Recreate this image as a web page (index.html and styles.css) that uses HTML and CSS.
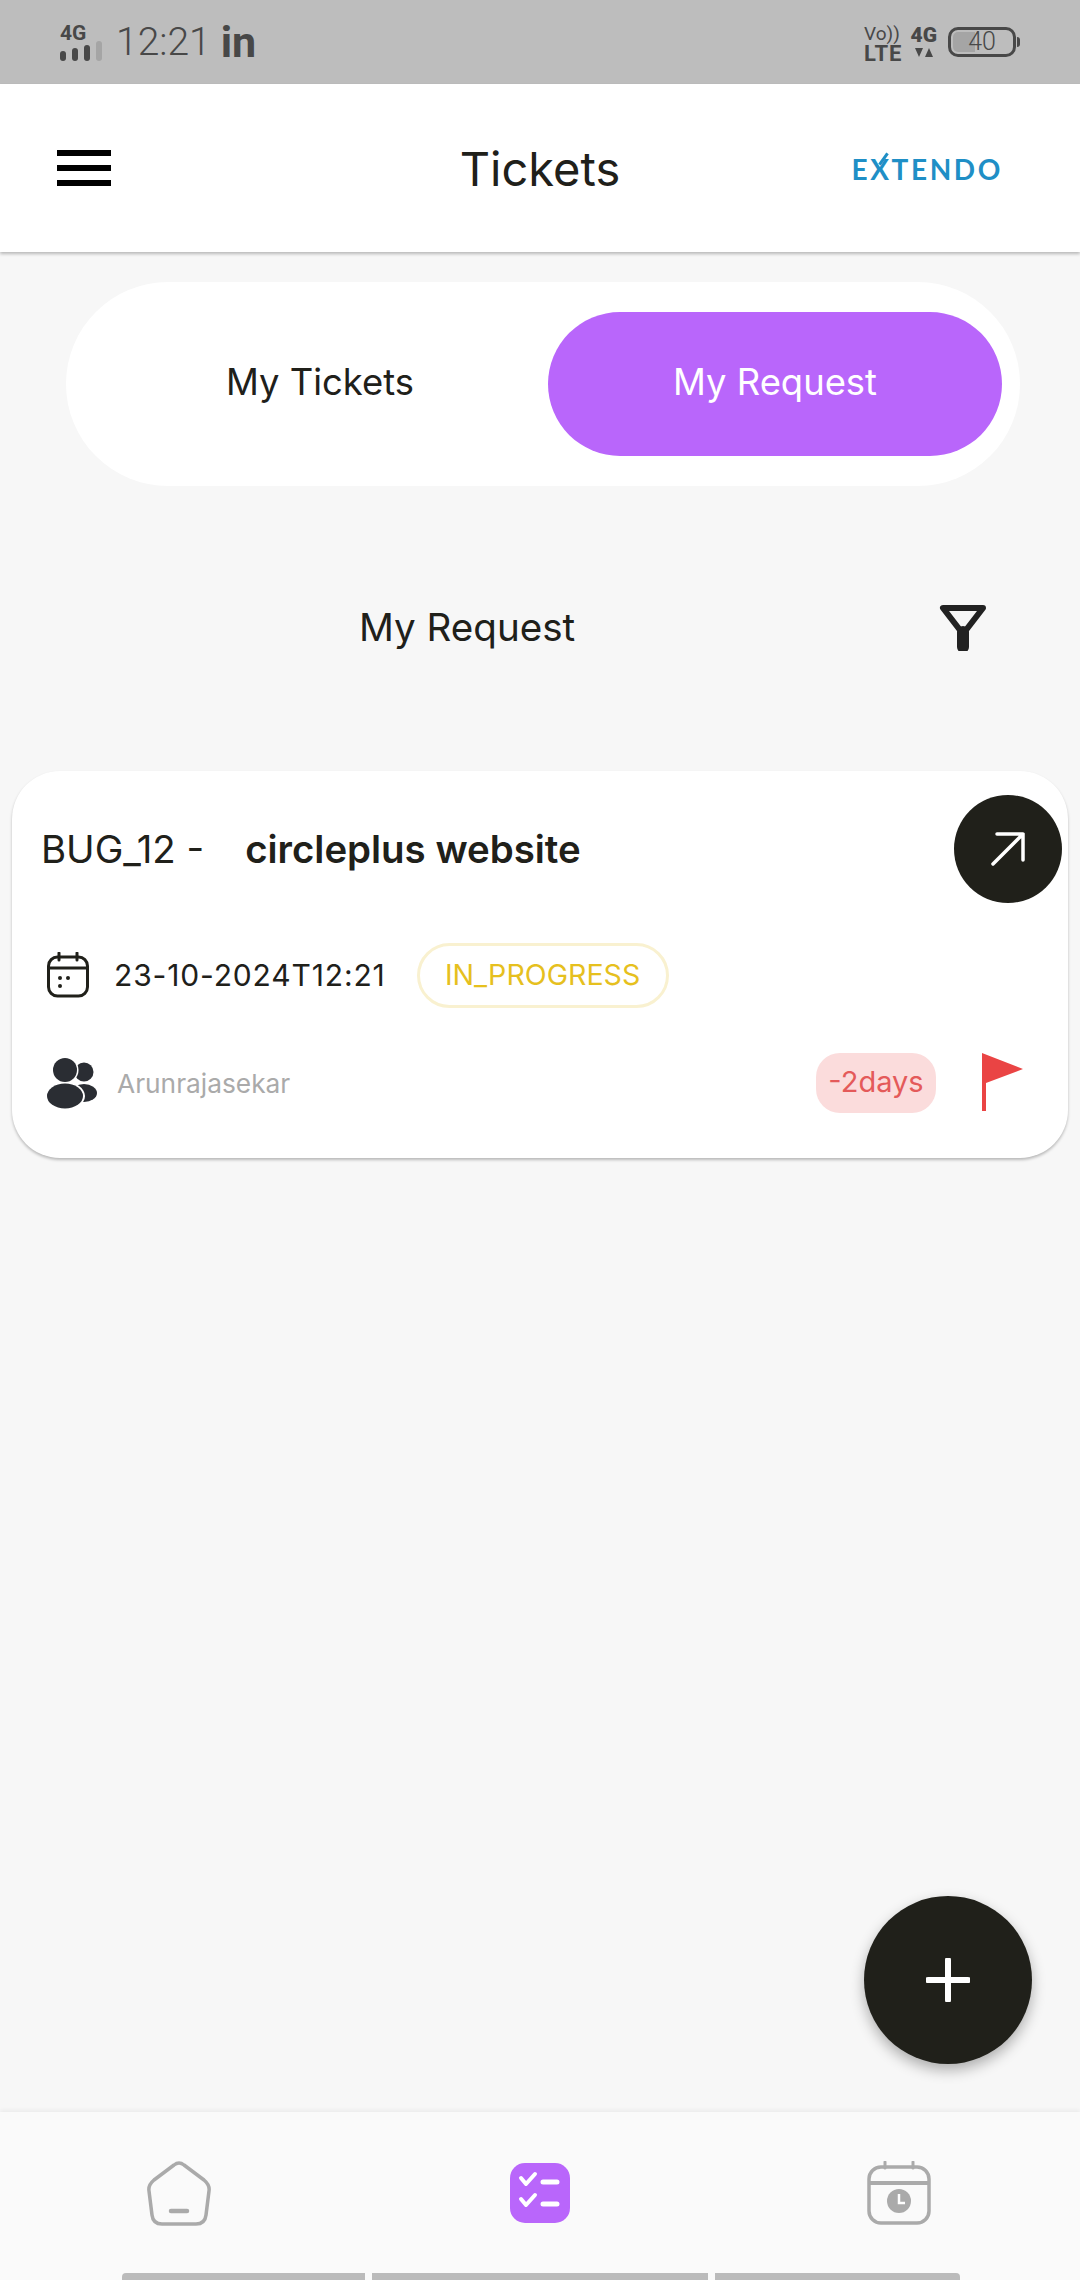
FILE: index.html
```html
<!DOCTYPE html>
<html lang="en">
  <head>
    <meta charset="UTF-8" />
    <meta name="viewport" content="width=device-width, initial-scale=1.0" />
    <title>Tickets</title>
    <link rel="stylesheet" href="styles.css">
  </head>
  <body>
    <div class="screen">
      <div class="status-bar">
        <div class="status-left">
          <div class="signal">
            <span class="signal-label">4G</span>
            <div class="signal-bars">
              <i class="bar bar-1"></i><i class="bar bar-2"></i><i class="bar bar-3"></i><i class="bar bar-4"></i>
            </div>
          </div>
          <span class="clock">12:21</span>
          <span class="linkedin">in</span>
        </div>
        <div class="status-right">
          <div class="volte"><span class="vo">Vo))</span><span class="lte">LTE</span></div>
          <div class="data">
            <span class="data-label">4G</span>
            <svg width="18" height="9" viewBox="0 0 18 9"><path d="M0 0H8L4 9ZM14 0L18 9H10Z" fill="#484848"/></svg>
          </div>
          <div class="battery"><span class="battery-fill"></span><span class="battery-text">40</span></div>
          <span class="battery-nub"></span>
        </div>
      </div>

      <header class="app-bar">
        <div class="menu"><span></span><span></span><span></span></div>
        <h1 class="app-title">Tickets</h1>
        <div class="logo">E<span class="logo-x">X</span>TENDO</div>
      </header>

      <main class="content">
        <div class="toggle">
          <div class="toggle-item">My Tickets</div>
          <div class="toggle-item active">My Request</div>
        </div>

        <div class="list-head">
          <h2 class="list-title">My Request</h2>
          <svg class="filter" width="48" height="48" viewBox="0 0 48 48">
            <path d="M4 5H44L24 31Z" fill="none" stroke="#222" stroke-width="6" stroke-linejoin="round"/>
            <path d="M24 29V44" stroke="#222" stroke-width="12" stroke-linecap="round"/>
          </svg>
        </div>

        <section class="card">
          <div class="card-top">
            <div class="card-title"><span class="ticket-id">BUG_12 -</span><b class="ticket-name">circleplus website</b></div>
            <div class="open-btn">
              <svg width="36" height="36" viewBox="0 0 36 36">
                <path d="M3 33L33 3M7 3H33V29" fill="none" stroke="#fff" stroke-width="3.5" stroke-linecap="round" stroke-linejoin="round"/>
              </svg>
            </div>
          </div>
          <div class="card-row">
            <svg width="42" height="46" viewBox="0 0 42 46">
              <rect x="1.5" y="5" width="39" height="39" rx="9" fill="none" stroke="#20201a" stroke-width="3"/>
              <path d="M2 16H40M12 1V8M30 1V8" fill="none" stroke="#20201a" stroke-width="3" stroke-linecap="round"/>
              <circle cx="13" cy="26" r="2" fill="#20201a"/><circle cx="21" cy="26" r="2" fill="#20201a"/><circle cx="13" cy="34" r="2" fill="#20201a"/>
            </svg>
            <span class="date">23-10-2024T12:21</span>
            <span class="status-pill">IN_PROGRESS</span>
          </div>
          <div class="card-row card-foot">
            <svg width="51" height="51" viewBox="0 0 51 51">
              <circle cx="37" cy="14" r="9.5" fill="#2a2d33"/>
              <ellipse cx="37" cy="35" rx="13" ry="9" fill="#2a2d33"/>
              <circle cx="18" cy="12" r="13.5" fill="#fff"/><circle cx="18" cy="12" r="12" fill="#2a2d33"/>
              <ellipse cx="18" cy="38" rx="20" ry="14" fill="#fff"/><ellipse cx="18" cy="38" rx="18" ry="12.5" fill="#2a2d33"/>
            </svg>
            <span class="assignee">Arunrajasekar</span>
            <span class="due">-2days</span>
            <svg class="flag" width="42" height="58" viewBox="0 0 42 58">
              <path d="M0 0L41 16L4 30V58H0Z" fill="#ea4444"/>
            </svg>
          </div>
        </section>

        <button class="fab" type="button">
          <svg width="44" height="44" viewBox="0 0 44 44"><path d="M22 2V42M2 22H42" stroke="#fff" stroke-width="6" stroke-linecap="round"/></svg>
        </button>
      </main>

      <nav class="bottom-nav">
        <div class="nav-icons">
          <svg width="64" height="66" viewBox="0 0 64 66">
            <path d="M27 5Q32 1 37 5L57 20Q63 25 62 31L59 55Q58 64 49 64H15Q6 64 5 55L2 31Q1 25 7 20Z" fill="none" stroke="#aaa" stroke-width="3.5" stroke-linejoin="round"/>
            <path d="M24 51H40" stroke="#aaa" stroke-width="4.5" stroke-linecap="round"/>
          </svg>
          <svg width="60" height="60" viewBox="0 0 60 60">
            <rect width="60" height="60" rx="15" fill="#b966fb"/>
            <path d="M11 15L16 21L25 11M11 36L16 42L25 32" fill="none" stroke="#fff" stroke-width="4" stroke-linecap="round" stroke-linejoin="round"/>
            <path d="M33 19H47M33 41H47" stroke="#fff" stroke-width="5" stroke-linecap="round"/>
          </svg>
          <svg width="64" height="64" viewBox="0 0 64 64">
            <rect x="2" y="6" width="60" height="56" rx="12" fill="none" stroke="#aaa" stroke-width="3.5"/>
            <path d="M2 22H62" stroke="#aaa" stroke-width="4"/>
            <path d="M18 1V7M46 1V7" stroke="#aaa" stroke-width="3" stroke-linecap="round"/>
            <circle cx="32" cy="40" r="12" fill="#aaa"/>
            <path d="M32 33V42H38" fill="none" stroke="#fff" stroke-width="2.5"/>
          </svg>
        </div>
        <div class="home-bar"><span class="seg-a"></span><span class="seg-b"></span><span class="seg-c"></span></div>
      </nav>
    </div>
  </body>
</html>
```

FILE: styles.css
```css
* {
  box-sizing: border-box;
}
body {
  margin: 0;
  font-family: Inter, "Liberation Sans", sans-serif;
  color: #20201a;
}
.screen {
  display: flex;
  flex-direction: column;
  width: 1080px;
  height: 2280px;
  overflow: hidden;
  background-color: #f7f7f7;
}

/* status bar */
.status-bar {
  display: flex;
  justify-content: space-between;
  align-items: center;
  flex: 0 0 84px;
  padding: 0 60px;
  background-color: #bdbdbd;
  color: #484848;
  font-family: Roboto, sans-serif;
}
.status-left {
  display: flex;
  align-items: center;
  gap: 14px;
}
.signal {
  display: flex;
  flex-direction: column;
  margin-top: 2px;
  gap: 1px;
}
.signal-label {
  font-size: 21px;
  line-height: 14px;
  font-weight: 700;
}
.signal-bars {
  display: flex;
  align-items: flex-end;
  gap: 6px;
  height: 20px;
}
.bar {
  width: 6px;
  border-radius: 3px;
  background-color: #484848;
}
.bar-1 { height: 10px; }
.bar-2 { height: 13px; }
.bar-3 { height: 16px; }
.bar-4 { height: 20px; background-color: #a5a5a5; }
.clock {
  font-size: 39px;
  font-weight: 300;
  line-height: 44px;
}
.linkedin {
  margin-left: -4px;
  font-size: 43px;
  font-weight: 700;
  line-height: 44px;
}
.status-right {
  display: flex;
  align-items: center;
}
.volte {
  display: flex;
  flex-direction: column;
  gap: 1px;
  margin-right: 8px;
  margin-top: 2px;
}
.vo {
  font-size: 19px;
  line-height: 19px;
}
.lte {
  font-size: 22px;
  font-weight: 700;
  line-height: 19px;
  letter-spacing: 1px;
}
.data {
  display: flex;
  flex-direction: column;
  align-items: center;
  gap: 5px;
  margin-right: 11px;
}
.data-label {
  font-size: 21px;
  line-height: 15px;
  font-weight: 900;
}
.battery {
  position: relative;
  width: 68px;
  height: 30px;
  border: 3px solid #484848;
  border-radius: 10px;
}
.battery-fill {
  position: absolute;
  left: 2px;
  top: 2px;
  bottom: 2px;
  width: 22px;
  border-radius: 5px 0 0 5px;
  background-color: #a5a5a5;
}
.battery-text {
  position: absolute;
  inset: 0;
  font-size: 25px;
  font-weight: 300;
  line-height: 24px;
  text-align: center;
}
.battery-nub {
  width: 3px;
  height: 10px;
  margin-left: 1px;
  border-radius: 0 3px 3px 0;
  background-color: #484848;
}

/* app bar */
.app-bar {
  position: relative;
  display: grid;
  grid-template-columns: 1fr auto 1fr;
  align-items: center;
  flex: 0 0 168px;
  padding: 0 57px;
  background-color: #fff;
  box-shadow: 0 2px 3px rgba(0, 0, 0, 0.25);
}
.menu {
  display: flex;
  flex-direction: column;
  gap: 9px;
  width: 54px;
}
.menu span {
  height: 6px;
  background-color: #000;
}
.app-title {
  margin: 2px 0 0;
  font-size: 47px;
  font-weight: 400;
  line-height: 54px;
}
.logo {
  justify-self: end;
  margin: 2px 20px 0 0;
  font-family: Lato, sans-serif;
  font-size: 28px;
  font-weight: 700;
  line-height: 34px;
  letter-spacing: 2.6px;
  color: #1f8fc6;
}
.logo-x {
  position: relative;
}
.logo-x::after {
  content: "";
  position: absolute;
  left: 12px;
  top: 0;
  width: 3px;
  height: 14px;
  background-color: #1f8fc6;
  transform: rotate(35deg);
}

/* main area */
.content {
  position: relative;
  display: flex;
  flex-direction: column;
  flex: 1;
  padding-top: 30px;
}
.toggle {
  display: flex;
  align-items: center;
  justify-content: space-between;
  width: 954px;
  height: 204px;
  margin-left: 66px;
  padding: 0 18px 0 27px;
  border-radius: 102px;
  background-color: #fff;
}
.toggle-item {
  flex: 0 0 454px;
  height: 144px;
  border-radius: 72px;
  font-size: 36.4px;
  line-height: 140px;
  text-align: center;
  color: #20201a;
}
.toggle-item.active {
  background-color: #b966fb;
  color: #fff;
}
.list-head {
  display: flex;
  align-items: center;
  height: 60px;
  margin-top: 111px;
  padding-left: 359px;
}
.list-title {
  margin: 0;
  font-size: 38.6px;
  font-weight: 400;
  line-height: 60px;
  white-space: nowrap;
}
.filter {
  margin-left: 364px;
}

/* ticket card */
.card {
  display: flex;
  flex-direction: column;
  width: 1056px;
  height: 387px;
  margin: 114px 0 0 12px;
  padding: 24px 6px 0 30px;
  border-radius: 48px;
  background-color: #fff;
  box-shadow: 0 2px 3px rgba(0, 0, 0, 0.25);
}
.card-top {
  display: flex;
  justify-content: space-between;
  align-items: center;
  height: 108px;
}
.card-title {
  display: flex;
  gap: 41px;
  margin-left: -1px;
  font-size: 38.4px;
  line-height: 44px;
}
.ticket-name {
  font-weight: 600;
}
.open-btn {
  display: flex;
  align-items: center;
  justify-content: center;
  width: 108px;
  height: 108px;
  border-radius: 50%;
  background-color: #20201a;
}
.card-row {
  display: flex;
  align-items: center;
  height: 66px;
  margin-top: 39px;
  padding-left: 5px;
}
.date {
  margin-left: 25px;
  font-size: 30px;
  letter-spacing: 0.85px;
}
.status-pill {
  width: 252px;
  height: 65px;
  margin-left: 31px;
  border: 3px solid #f9f1d0;
  border-radius: 33px;
  font-size: 28.6px;
  line-height: 57px;
  text-align: center;
  color: #e6c01e;
}
.card-foot {
  margin-top: 42px;
}
.assignee {
  margin-left: 19px;
  font-size: 26.3px;
  color: #aaa;
}
.due {
  width: 120px;
  height: 60px;
  margin-left: auto;
  border-radius: 24px;
  background-color: #fbdcdc;
  font-size: 29px;
  line-height: 58px;
  text-align: center;
  color: #e45a5a;
}
.flag {
  margin: -2px 38px 0 46px;
}
.fab {
  position: absolute;
  right: 48px;
  bottom: 48px;
  display: flex;
  align-items: center;
  justify-content: center;
  width: 168px;
  height: 168px;
  padding: 0;
  border: none;
  border-radius: 50%;
  background-color: #20201a;
  box-shadow: 0 6px 14px rgba(0, 0, 0, 0.3);
}

/* bottom navigation */
.bottom-nav {
  display: flex;
  flex-direction: column;
  flex: 0 0 168px;
  background-color: #fafafa;
  box-shadow: 0 -2px 4px rgba(0, 0, 0, 0.05);
}
.nav-icons {
  display: flex;
  align-items: center;
  height: 161px;
  padding: 0 0 0 147px;
}
.nav-icons svg:nth-child(2) {
  margin-left: 299px;
}
.nav-icons svg:nth-child(3) {
  margin-left: 297px;
}
.home-bar {
  display: flex;
  gap: 7px;
  height: 7px;
  padding-left: 122px;
}
.home-bar span {
  background-color: #bbb;
}
.seg-a { width: 243px; border-radius: 4px 0 0 0; }
.seg-b { width: 336px; }
.seg-c { width: 245px; border-radius: 0 4px 0 0; }
```
